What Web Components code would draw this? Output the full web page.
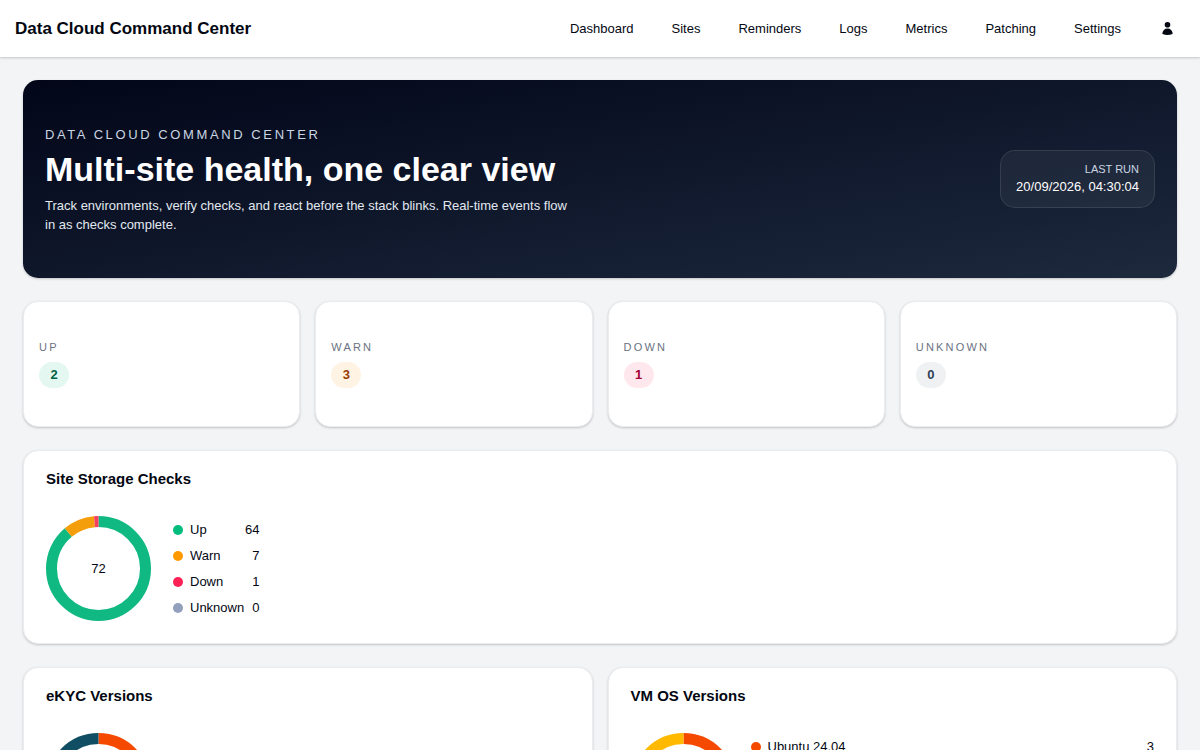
<!DOCTYPE html>
<html lang="en">
<head>
<meta charset="UTF-8">
<meta name="viewport" content="width=device-width, initial-scale=1.0">
<title>Data Cloud Command Center</title>
<style>
    :root {
        --ink: #030712;
        --muted: #6a7282;
        --surface: #fff;
        --line: #eaecef;
        --shadow: 0 1px 3px rgba(0, 0, 0, 0.1), 0 1px 2px rgba(0, 0, 0, 0.1);
    }

    body {
        margin: 0;
        background: #f3f4f6;
        color: var(--ink);
        font: 13px/19px "Liberation Sans", Arial, sans-serif;
    }

    main {
        display: flex;
        flex-direction: column;
        gap: 23px;
        padding: 23px;
    }

    .stats {
        display: grid;
        grid-template-columns: repeat(4, 1fr);
        gap: 15px;
    }

    .versions {
        display: grid;
        grid-template-columns: repeat(2, 1fr);
        gap: 15px;
    }
</style>
</head>
<body>
    <app-header brand="Data Cloud Command Center">
        <nav-link href="#dashboard">Dashboard</nav-link>
        <nav-link href="#sites">Sites</nav-link>
        <nav-link href="#reminders">Reminders</nav-link>
        <nav-link href="#logs">Logs</nav-link>
        <nav-link href="#metrics">Metrics</nav-link>
        <nav-link href="#patching">Patching</nav-link>
        <nav-link href="#settings">Settings</nav-link>
    </app-header>

    <main>
        <hero-banner>
            <span slot="eyebrow">Data Cloud Command Center</span>
            <span slot="title">Multi-site health, one clear view</span>
            Track environments, verify checks, and react before the stack blinks. Real-time events flow in as checks complete.
            <last-run slot="aside" time="20/09/2026, 04:30:04"></last-run>
        </hero-banner>

        <section class="stats">
            <stat-card label="Up" tone="up">2</stat-card>
            <stat-card label="Warn" tone="warn">3</stat-card>
            <stat-card label="Down" tone="down">1</stat-card>
            <stat-card label="Unknown">0</stat-card>
        </section>

        <chart-card heading="Site Storage Checks">
            <donut-chart>
                <legend-item color="#00bc7d" arc="#10b981" value="64">Up</legend-item>
                <legend-item color="#fe9a00" arc="#f59e0b" value="7">Warn</legend-item>
                <legend-item color="#ff2056" arc="#f43f5e" value="1">Down</legend-item>
                <legend-item color="#92a0bb" arc="#94a3b8" value="0">Unknown</legend-item>
            </donut-chart>
        </chart-card>

        <section class="versions">
            <chart-card heading="eKYC Versions">
                <donut-chart wide>
                    <legend-item color="#f54900" value="2">2.4.1</legend-item>
                    <legend-item color="#104e64" value="2">2.4.0</legend-item>
                </donut-chart>
            </chart-card>
            <chart-card heading="VM OS Versions">
                <donut-chart wide>
                    <legend-item color="#f54900" value="3">Ubuntu 24.04</legend-item>
                    <legend-item color="#009689" value="2">Ubuntu 22.04</legend-item>
                    <legend-item color="#104e64" value="1">Debian 12</legend-item>
                    <legend-item color="#ffb900" value="2">Rocky Linux 9</legend-item>
                </donut-chart>
            </chart-card>
        </section>
    </main>

<script>
// Attaches an open shadow root with a clone of the template
function render(host, template) {
    host.attachShadow({ mode: 'open' }).appendChild(template.content.cloneNode(true));
    return host.shadowRoot;
}

function createTemplate(html) {
    const template = document.createElement('template');
    template.innerHTML = html;
    return template;
}

// ---- Header ----

const headerTemplate = createTemplate(`
    <style>
        :host {
            display: block;
            background: var(--surface);
            box-shadow: var(--shadow);
        }

        header {
            display: flex;
            align-items: center;
            justify-content: space-between;
            padding: 11px 15px;
        }

        .brand {
            color: inherit;
            font-size: 17px;
            font-weight: 700;
            line-height: 26px;
            text-decoration: none;
        }

        nav {
            display: flex;
            align-items: center;
            gap: 16px;
        }

        button {
            display: flex;
            margin-left: 2px;
            padding: 10px;
            border: 0;
            border-radius: 8px;
            background: none;
            color: inherit;
            cursor: pointer;
        }

        button:hover {
            background: #f3f4f6;
        }

        svg {
            width: 15px;
            height: 15px;
        }
    </style>

    <header>
        <a class="brand" href="#"></a>
        <nav>
            <slot></slot>
            <button type="button" aria-label="Account">
                <svg viewBox="0 0 24 24" fill="currentColor" aria-hidden="true">
                    <path fill-rule="evenodd" clip-rule="evenodd" d="M7.5 6a4.5 4.5 0 1 1 9 0 4.5 4.5 0 0 1-9 0ZM3.751 20.105a8.25 8.25 0 0 1 16.498 0 .75.75 0 0 1-.437.695A18.683 18.683 0 0 1 12 22.5c-2.786 0-5.433-.608-7.812-1.7a.75.75 0 0 1-.437-.695Z"/>
                </svg>
            </button>
        </nav>
    </header>
`);

class AppHeader extends HTMLElement {
    constructor() {
        super();
        render(this, headerTemplate);
    }

    connectedCallback() {
        this.shadowRoot.querySelector('.brand').textContent = this.getAttribute('brand');
    }
}

const navLinkTemplate = createTemplate(`
    <style>
        :host {
            display: block;
        }

        a {
            display: block;
            padding: 8px 11px;
            border-radius: 8px;
            color: inherit;
            text-decoration: none;
        }

        a:hover {
            background: #f3f4f6;
        }
    </style>
    <a><slot></slot></a>
`);

class NavLink extends HTMLElement {
    constructor() {
        super();
        render(this, navLinkTemplate);
    }

    connectedCallback() {
        this.shadowRoot.querySelector('a').setAttribute('href', this.getAttribute('href'));
    }
}

// ---- Hero ----

const heroTemplate = createTemplate(`
    <style>
        :host {
            display: flex;
            align-items: center;
            justify-content: space-between;
            gap: 22px;
            padding: 44px 22px;
            border-radius: 15px;
            background: linear-gradient(to bottom right, #020618, #0f172b, #1d293d);
            box-shadow: var(--shadow);
            color: #fff;
        }

        .text {
            display: flex;
            flex-direction: column;
            gap: 4px;
            max-width: 530px;
        }

        p, h1 {
            margin: 0;
        }

        .eyebrow {
            color: #cad5e2;
            line-height: 22px;
            letter-spacing: 0.2em;
            text-transform: uppercase;
        }

        h1 {
            margin-bottom: 4px;
            font-size: 34px;
            line-height: 38px;
        }

        .lead {
            color: #e2e8f0;
        }
    </style>

    <div class="text">
        <p class="eyebrow"><slot name="eyebrow"></slot></p>
        <h1><slot name="title"></slot></h1>
        <p class="lead"><slot></slot></p>
    </div>
    <slot name="aside"></slot>
`);

class HeroBanner extends HTMLElement {
    constructor() {
        super();
        render(this, heroTemplate);
    }
}

const lastRunTemplate = createTemplate(`
    <style>
        :host {
            display: block;
            flex: none;
            padding: 11px 15px;
            border: 1px solid rgba(255, 255, 255, 0.1);
            border-radius: 15px;
            background: rgba(255, 255, 255, 0.05);
            text-align: right;
        }

        .label {
            color: #cad5e2;
            font-size: 11px;
            line-height: 15px;
            text-transform: uppercase;
        }

        time {
            display: block;
        }
    </style>
    <div class="label">Last run</div>
    <time></time>
`);

class LastRun extends HTMLElement {
    constructor() {
        super();
        render(this, lastRunTemplate);
    }

    connectedCallback() {
        this.shadowRoot.querySelector('time').textContent = this.getAttribute('time');
    }
}

// ---- Stat cards ----

const statTemplate = createTemplate(`
    <style>
        :host {
            --pill-bg: #eff1f3;
            --pill-ink: #314158;
            display: flex;
            flex-direction: column;
            align-items: flex-start;
            gap: 7px;
            padding: 37px 15px 38px;
            border: 1px solid var(--line);
            border-radius: 15px;
            background: var(--surface);
            box-shadow: var(--shadow);
        }

        :host([tone="up"]) {
            --pill-bg: #e4f7f1;
            --pill-ink: #006045;
        }

        :host([tone="warn"]) {
            --pill-bg: #fff3e4;
            --pill-ink: #973c00;
        }

        :host([tone="down"]) {
            --pill-bg: #ffe8ed;
            --pill-ink: #a50036;
        }

        .label {
            color: var(--muted);
            font-size: 11px;
            line-height: 16px;
            letter-spacing: 0.2em;
            text-transform: uppercase;
        }

        .pill {
            box-sizing: border-box;
            min-width: 30px;
            padding: 0 11px;
            border-radius: 13px;
            background: var(--pill-bg);
            color: var(--pill-ink);
            font-weight: 700;
            line-height: 26px;
            text-align: center;
        }
    </style>
    <span class="label"></span>
    <span class="pill"><slot></slot></span>
`);

class StatCard extends HTMLElement {
    constructor() {
        super();
        render(this, statTemplate);
    }

    connectedCallback() {
        this.shadowRoot.querySelector('.label').textContent = this.getAttribute('label');
    }
}

// ---- Charts ----

const chartCardTemplate = createTemplate(`
    <style>
        :host {
            display: flex;
            flex-direction: column;
            gap: 26px;
            padding: 17px 22px 22px;
            border: 1px solid var(--line);
            border-radius: 15px;
            background: var(--surface);
            box-shadow: var(--shadow);
        }

        h2 {
            margin: 0;
            font-size: 15px;
            line-height: 22px;
        }
    </style>
    <h2></h2>
    <slot></slot>
`);

class ChartCard extends HTMLElement {
    constructor() {
        super();
        render(this, chartCardTemplate);
    }

    connectedCallback() {
        this.shadowRoot.querySelector('h2').textContent = this.getAttribute('heading');
    }
}

const donutTemplate = createTemplate(`
    <style>
        :host {
            display: flex;
            align-items: center;
            gap: 22px;
        }

        :host([wide]) {
            gap: 15px;
        }

        svg {
            flex: none;
            width: 105px;
            height: 105px;
        }

        circle {
            fill: none;
            stroke-width: 11;
        }

        text {
            fill: currentColor;
            text-anchor: middle;
        }

        .legend {
            display: flex;
            flex-direction: column;
            gap: 7px;
        }

        :host([wide]) .legend {
            flex: 1;
        }
    </style>
    <svg viewBox="0 0 105 105" role="img">
        <g transform="rotate(-90 52.5 52.5)"></g>
        <text x="52.5" y="57"></text>
    </svg>
    <div class="legend"><slot></slot></div>
`);

class DonutChart extends HTMLElement {
    constructor() {
        super();
        render(this, donutTemplate);
    }

    connectedCallback() {
        const items = [...this.querySelectorAll('legend-item')];
        const values = items.map((item) => Number(item.getAttribute('value')));
        const total = values.reduce((sum, value) => sum + value, 0);
        const ring = this.shadowRoot.querySelector('g');
        let offset = 0;

        items.forEach((item, i) => {
            if (!values[i]) return;
            const arc = document.createElementNS('http://www.w3.org/2000/svg', 'circle');
            arc.setAttribute('cx', 52.5);
            arc.setAttribute('cy', 52.5);
            arc.setAttribute('r', 47);
            arc.setAttribute('pathLength', total);
            arc.setAttribute('stroke', item.getAttribute('arc') || item.getAttribute('color'));
            arc.setAttribute('stroke-dasharray', `${values[i]} ${total - values[i]}`);
            arc.setAttribute('stroke-dashoffset', -offset);
            ring.appendChild(arc);
            offset += values[i];
        });

        this.shadowRoot.querySelector('text').textContent = total;
    }
}

const legendTemplate = createTemplate(`
    <style>
        :host {
            display: flex;
            justify-content: space-between;
            gap: 8px;
        }

        .name {
            display: flex;
            align-items: center;
            gap: 7px;
        }

        .dot {
            width: 10px;
            height: 10px;
            border-radius: 50%;
        }
    </style>
    <span class="name"><span class="dot"></span><slot></slot></span>
    <span class="value"></span>
`);

class LegendItem extends HTMLElement {
    constructor() {
        super();
        render(this, legendTemplate);
    }

    connectedCallback() {
        this.shadowRoot.querySelector('.dot').style.background = this.getAttribute('color');
        this.shadowRoot.querySelector('.value').textContent = this.getAttribute('value');
    }
}

customElements.define('app-header', AppHeader);
customElements.define('nav-link', NavLink);
customElements.define('hero-banner', HeroBanner);
customElements.define('last-run', LastRun);
customElements.define('stat-card', StatCard);
customElements.define('chart-card', ChartCard);
customElements.define('donut-chart', DonutChart);
customElements.define('legend-item', LegendItem);
</script>
</body>
</html>
